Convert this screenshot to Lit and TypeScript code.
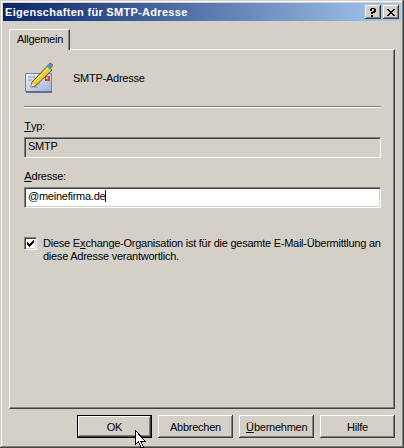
import { css, html, LitElement } from 'lit';
import { customElement } from 'lit/decorators.js';

@customElement('app-root')
export class AppRoot extends LitElement {
    static override styles = css`
        :host {
            display: block;
            width: 404px;
            height: 448px;
            font-family: 'Liberation Sans', Arial, sans-serif;
            font-size: 11px;
            letter-spacing: -0.25px;
            color: #000;
            background: #d4d0c8;
            overflow: hidden;
        }
        .window {
            position: relative;
            box-sizing: border-box;
            width: 404px;
            height: 448px;
            padding: 3px;
            background: #d4d0c8;
            box-shadow:
                inset -1px -1px 0 #404040,
                inset 1px 1px 0 #d4d0c8,
                inset -2px -2px 0 #808080,
                inset 2px 2px 0 #fff;
            display: flex;
            flex-direction: column;
        }
        .title {
            height: 18px;
            flex: none;
            display: flex;
            align-items: center;
            justify-content: space-between;
            padding: 0 2px;
            background: linear-gradient(90deg, #0a246a, #a6caf0);
            color: #fff;
            font-weight: bold;
            letter-spacing: 0.3px;
        }
        .caps {
            display: flex;
            align-items: center;
        }
        .cap {
            box-sizing: border-box;
            width: 16px;
            height: 14px;
            background: #d4d0c8;
            box-shadow:
                inset -1px -1px 0 #404040,
                inset 1px 1px 0 #fff,
                inset -2px -2px 0 #808080;
            display: flex;
            align-items: center;
            justify-content: center;
        }
        .cap + .cap {
            margin-left: 2px;
        }
        .body {
            flex: 1;
            display: flex;
            flex-direction: column;
            padding: 8px 6px 0;
        }
        .tabs {
            display: flex;
            height: 20px;
            flex: none;
            position: relative;
            z-index: 1;
        }
        .tab {
            box-sizing: border-box;
            width: 61px;
            height: 21px;
            padding: 2px 0 0 7px;
            background: #d4d0c8;
            border-top: 1px solid #fff;
            border-left: 1px solid #fff;
            border-right: 1px solid #404040;
            border-top-left-radius: 2px;
            box-shadow: inset -1px 0 0 #808080;
            line-height: 14px;
        }
        .sheet {
            box-sizing: border-box;
            width: 386px;
            height: 360px;
            flex: none;
            padding: 0 13px 0 14px;
            border-top: 1px solid #fff;
            border-left: 1px solid #fff;
            border-right: 1px solid #404040;
            border-bottom: 1px solid #404040;
            box-shadow: inset -1px -1px 0 #808080;
        }
        .head {
            display: flex;
            align-items: center;
            height: 56px;
            gap: 20px;
            padding-left: 1px;
        }
        .head svg {
            flex: none;
        }
        .sep {
            height: 2px;
            background: #808080;
            border-bottom: 1px solid #fff;
            box-sizing: border-box;
            width: 357px;
        }
        .label {
            display: block;
            line-height: 14px;
        }
        .u {
            text-decoration: underline;
            letter-spacing: 0;
            margin-left: 0.25px;
        }
        .typ {
            margin-top: 11px;
        }
        .field {
            box-sizing: border-box;
            width: 357px;
            height: 21px;
            margin-top: 4px;
            padding: 1px 0 0 3px;
            line-height: 14px;
            white-space: nowrap;
            border-top: 1px solid #808080;
            border-left: 1px solid #808080;
            border-right: 1px solid #fff;
            border-bottom: 1px solid #fff;
            box-shadow:
                inset 1px 1px 0 #404040,
                inset -1px -1px 0 #d4d0c8;
        }
        .field.edit {
            background: #fff;
        }
        .caret {
            display: inline-block;
            width: 1px;
            height: 12px;
            margin-top: 1px;
            background: #000;
            vertical-align: top;
        }
        .adresse {
            margin-top: 11px;
        }
        .check {
            display: flex;
            align-items: flex-start;
            gap: 6px;
            margin-top: 29px;
            width: 357px;
        }
        .box {
            box-sizing: border-box;
            flex: none;
            width: 13px;
            height: 13px;
            background: #fff;
            border-top: 1px solid #808080;
            border-left: 1px solid #808080;
            border-right: 1px solid #fff;
            border-bottom: 1px solid #fff;
            box-shadow:
                inset 1px 1px 0 #404040,
                inset -1px -1px 0 #d4d0c8;
            display: flex;
            align-items: center;
            justify-content: center;
        }
        .check-text {
            line-height: 13px;
            white-space: nowrap;
        }
        .check-text div {
            display: block;
        }
        .buttons {
            display: flex;
            justify-content: flex-end;
            gap: 6px;
            margin-top: 6px;
            width: 386px;
        }
        .btn {
            box-sizing: border-box;
            width: 75px;
            height: 23px;
            display: flex;
            align-items: center;
            justify-content: center;
            background: #d4d0c8;
            box-shadow:
                inset -1px -1px 0 #404040,
                inset 1px 1px 0 #fff,
                inset -2px -2px 0 #808080;
        }
        .btn.default {
            border: 1px solid #000;
        }
        .cursor {
            position: absolute;
            left: 135px;
            top: 430px;
        }
    `;

    override render() {
        return html`
            <div class="window">
                <div class="title">
                    <span>Eigenschaften für SMTP-Adresse</span>
                    <div class="caps">
                        <div class="cap">
                            <svg width="8" height="9" viewBox="0 0 8 9" shape-rendering="crispEdges">
                                <path fill="#000" d="M1 1h1v-1h4v1h1v3h-1v1h-2v1h-2v-2h2v-1h1v-2h-2v2h-2zM2 7h2v2h-2z" />
                            </svg>
                        </div>
                        <div class="cap">
                            <svg width="8" height="7" viewBox="0 0 8 7" shape-rendering="crispEdges">
                                <path fill="#000" d="M0 0h2v1h1v1h2v-1h1v-1h2v1h-1v1h-1v1h-1v1h1v1h1v1h1v1h-2v-1h-1v-1h-2v1h-1v1h-2v-1h1v-1h1v-1h1v-1h-1v-1h-1v-1h-1z" />
                            </svg>
                        </div>
                    </div>
                </div>
                <div class="body">
                    <div class="tabs"><div class="tab">Allgemein</div></div>
                    <div class="sheet">
                        <div class="head">
                            ${this.renderIcon()}
                            <span>SMTP-Adresse</span>
                        </div>
                        <div class="sep"></div>
                        <div class="label typ"><span class="u">T</span>yp:</div>
                        <div class="field">SMTP</div>
                        <div class="label adresse"><span class="u">A</span>dresse:</div>
                        <div class="field edit">@meinefirma.de<span class="caret"></span></div>
                        <div class="check">
                            <div class="box">
                                <svg width="7" height="7" viewBox="0 0 7 7" shape-rendering="crispEdges">
                                    <path fill="#000" d="M6 0h1v3h-1v1h-1v1h-1v1h-1v1h-1v-1h-1v-1h-1v-3h1v1h1v1h1v-1h1v-1h1v-1h1z" />
                                </svg>
                            </div>
                            <div class="check-text">
                                <div>Diese E<span class="u">x</span>change-Organisation ist für die gesamte E-Mail-Übermittlung an</div>
                                <div>diese Adresse verantwortlich.</div>
                            </div>
                        </div>
                    </div>
                    <div class="buttons">
                        <div class="btn default">OK</div>
                        <div class="btn">Abbrechen</div>
                        <div class="btn"><span><span class="u">Ü</span>bernehmen</span></div>
                        <div class="btn">Hilfe</div>
                    </div>
                </div>
                <svg class="cursor" width="13" height="18" viewBox="0 0 13 18" shape-rendering="crispEdges">
                    <path fill="#fff" stroke="#000" d="M0.5 0.5v14l3-3 2.5 6h2.5l-2.5-6h4.5z" />
                </svg>
            </div>
        `;
    }

    private renderIcon() {
        return html`
            <svg width="28" height="32" viewBox="0 0 28 32">
                <defs>
                    <linearGradient id="env" x1="0" y1="0" x2="1" y2="1">
                        <stop offset="0" stop-color="#eef1f8" />
                        <stop offset="1" stop-color="#9fb0d6" />
                    </linearGradient>
                </defs>
                <rect x="0.5" y="11.5" width="26" height="18" fill="url(#env)" stroke="#7488b0" />
                <rect x="1" y="29" width="26" height="2" fill="#5d6f98" />
                <rect x="20" y="14" width="5" height="5" fill="#d84050" />
                <rect x="21" y="15" width="2" height="2" fill="#f0d040" />
                <path d="M3 15h7M3 18h4M7 22h8M7 25h6" stroke="#8494b8" fill="none" />
                <path d="M7 20 L22.5 4 L27 8 L11 23.5 L6 25 Z" fill="#f4c830" stroke="#4a4020" stroke-width="0.9" />
                <path d="M7 21 L10 23.5 L6 25 Z" fill="#f4e4b0" />
                <path d="M9 20 L24 5" stroke="#fff0a0" fill="none" />
                <path d="M21.5 4 L24 1.5 L27.5 5 L25 7.5 Z" fill="#30a0c8" />
                <path d="M24 1.5 L25 0.5 L28 2.5 L27.5 5 Z" fill="#c05040" />
            </svg>
        `;
    }
}

declare global {
    interface HTMLElementTagNameMap {
        'app-root': AppRoot;
    }
}
